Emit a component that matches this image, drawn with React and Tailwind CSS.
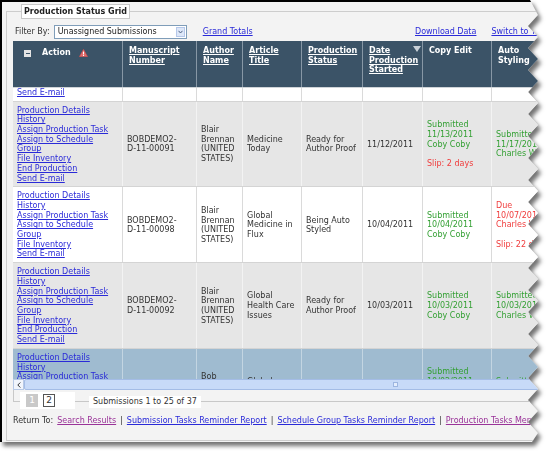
import React, { useLayoutEffect, useRef } from "react";

const LINK = "text-[#2a2ad8] underline";
const VISITED = "text-[#9a3399] underline";
const G = "text-[#34a034]";
const R = "text-[#f03c3c]";

const COLS = ["w-[110px]", "w-[74px]", "w-[46px]", "w-[59px]", "w-[61px]", "w-[60px]", "w-[69px]", "w-[70px]"];

function Lines({ lines, color = "" }) {
  return (
    <div className={color}>
      {lines.map((l, i) => {
        const text = Array.isArray(l) ? l[0] : l;
        const c = Array.isArray(l) ? l[1] : "";
        return (
          <div key={i} className={"whitespace-nowrap h-[9.7px] " + c}>
            {text || "\u00a0"}
          </div>
        );
      })}
    </div>
  );
}

function Actions({ end }) {
  return (
    <div className="flex flex-col items-start whitespace-nowrap">
      <a href="#" className={LINK}>Production Details</a>
      <a href="#" className={LINK}>History</a>
      <a href="#" className={LINK}>Assign Production Task</a>
      <a href="#" className={LINK}>Assign to Schedule<br />Group</a>
      <a href="#" className={LINK}>File Inventory</a>
      {end && <a href="#" className={LINK}>End Production</a>}
      <a href="#" className={LINK}>Send E-mail</a>
    </div>
  );
}

const BLAIR = ["Blair", "Brennan", "(UNITED", "STATES)"];

const rows = [
  {
    bg: "bg-white", sep: "border-[#dadada]", end: true,
    ms: ["BOBDEMO2-", "D-11-00093"], author: BLAIR, article: ["Medicine", "Now"],
    status: ["Ready for", "Author Proof"], date: "11/14/2011",
    copy: [["Submitted", G], ["11/15/2011", G], ["Coby Coby", G]],
    auto: [["Submitted", G], ["11/18/2011", G], ["Charles Wong", G]],
  },
  {
    bg: "bg-[#e6e6e6]", sep: "border-[#f3f3f3]", end: true,
    ms: ["BOBDEMO2-", "D-11-00091"], author: BLAIR, article: ["Medicine", "Today"],
    status: ["Ready for", "Author Proof"], date: "11/12/2011",
    copy: [["Submitted", G], ["11/13/2011", G], ["Coby Coby", G], "", ["Slip: 2 days", R]],
    auto: [["Submitted", G], ["11/17/2011", G], ["Charles Wong", G]],
  },
  {
    bg: "bg-white", sep: "border-[#dadada]", end: false,
    ms: ["BOBDEMO2-", "D-11-00098"], author: BLAIR, article: ["Global", "Medicine in", "Flux"],
    status: ["Being Auto", "Styled"], date: "10/04/2011",
    copy: [["Submitted", G], ["10/04/2011", G], ["Coby Coby", G]],
    auto: [["Due", R], ["10/07/2011", R], ["Charles Wong", R], "", ["Slip: 22 days", R]],
  },
  {
    bg: "bg-[#e6e6e6]", sep: "border-[#f3f3f3]", end: true,
    ms: ["BOBDEMO2-", "D-11-00092"], author: BLAIR, article: ["Global", "Health Care", "Issues"],
    status: ["Ready for", "Author Proof"], date: "10/03/2011",
    copy: [["Submitted", G], ["10/03/2011", G], ["Coby Coby", G]],
    auto: [["Submitted", G], ["10/03/2011", G], ["Charles Wong", G]],
  },
  {
    bg: "bg-[#9fbbd0]", sep: "border-[#c3d5e2]", end: true,
    ms: ["BOBDEMO2-", "D-11-00089"], author: ["Bob", "Smith", "(UNITED", "STATES)"], article: ["Global", "Medicine", "Review"],
    status: ["Ready for", "Author Proof"], date: "10/01/2011",
    copy: [["Submitted", G], ["10/02/2011", G], ["Coby Coby", G], "", ["Slip: 1 day", R]],
    auto: [["Submitted", G], ["10/05/2011", G], ["Charles Wong", G]],
  },
];

function Row({ row, rowRef }) {
  const cell = (i) =>
    COLS[i] + " shrink-0 overflow-hidden border-r flex flex-col justify-center pl-[4px] pt-[4px] pb-[3px] " + row.sep;
  return (
    <div ref={rowRef} className={"flex border-b border-[#d4d4d4] " + row.bg}>
      <div className={cell(0)}><Actions end={row.end} /></div>
      <div className={cell(1)}><Lines lines={row.ms} /></div>
      <div className={cell(2)}><Lines lines={row.author} /></div>
      <div className={cell(3)}><Lines lines={row.article} /></div>
      <div className={cell(4)}><Lines lines={row.status} /></div>
      <div className={cell(5)}><Lines lines={[row.date]} /></div>
      <div className={cell(6)}><Lines lines={row.copy} /></div>
      <div className={cell(7)}><Lines lines={row.auto} /></div>
    </div>
  );
}

function HeadCell({ i, lines, link = true, children }) {
  return (
    <div className={COLS[i] + " relative shrink-0 border-r border-[#8797a5] pl-[6px] pt-[5px]"}>
      {lines.map((l, k) => (
        <div key={k} className={"whitespace-nowrap h-[9.7px] " + (link ? "underline" : "")}>{l}</div>
      ))}
      {children}
    </div>
  );
}

export default function App() {
  const scRef = useRef(null);
  const r0 = useRef(null);
  useLayoutEffect(() => {
    if (scRef.current && r0.current) {
      scRef.current.scrollTop = r0.current.offsetHeight - 14;
    }
  }, []);

  return (
    <div className="w-[547px] h-[451px] bg-white overflow-hidden [font-family:'DejaVu_Sans',Verdana,sans-serif] text-[8px] leading-[9.7px] text-[#333]">
      <div className="[filter:drop-shadow(3px_4px_2px_rgba(0,0,0,0.55))]">
        <div className="w-[547px] h-[442px] bg-[#f3f3f3] border-l-2 border-t-2 border-black overflow-hidden [clip-path:polygon(0_0,530px_0,538px_15px,528px_26px,538px_37px,528px_48px,538px_59px,528px_70px,538px_81px,528px_92px,538px_103px,528px_114px,538px_125px,528px_136px,538px_147px,528px_158px,538px_169px,528px_180px,538px_191px,528px_202px,538px_213px,528px_224px,538px_235px,528px_246px,538px_257px,528px_268px,538px_279px,528px_290px,538px_301px,528px_312px,538px_323px,528px_334px,538px_345px,528px_356px,538px_367px,528px_378px,538px_389px,528px_400px,538px_411px,528px_422px,538px_433px,532px_442px,0_442px)]">
          <fieldset className="ml-[4px] mt-[2px] w-[600px] h-[437px] border border-[#cdcdcd] pl-[6px] min-w-0">
            <legend className="ml-[8px] px-[2px] border border-[#c9c9c9] bg-white font-bold leading-[13px] text-[#222]">
              Production Status Grid
            </legend>

            {/* Filter row */}
            <div className="mt-[6px] flex items-center h-[14px]">
              <div className="w-[402px] shrink-0 flex items-center">
                <span className="ml-[2px] text-[#333]">Filter By:</span>
                <div className="ml-[4px] w-[133px] h-[14px] border border-[#7f9db9] bg-white flex items-center">
                  <span className="pl-[3px] flex-1 text-[#222] whitespace-nowrap">Unassigned Submissions</span>
                  <div className="mr-[1px] w-[9px] h-[10px] bg-[#dde7f8] border border-[#b6c8ea] flex items-center justify-center">
                    <svg width="5" height="4" viewBox="0 0 5 4">
                      <path d="M0.5 0.8 L2.5 3 L4.5 0.8" fill="none" stroke="#4d6185" strokeWidth="1" />
                    </svg>
                  </div>
                </div>
                <a href="#" className={"ml-[16px] " + LINK}>Grand Totals</a>
              </div>
              <a href="#" className={"whitespace-nowrap " + LINK}>Download Data</a>
              <a href="#" className={"ml-[15px] whitespace-nowrap " + LINK}>Switch to Tabular View</a>
            </div>

            {/* Header */}
            <div className="mt-[2px] flex w-[549px] h-[47px] bg-[#3b5367] border-b border-[#cfd4d8] text-white font-bold">
              <div className={COLS[0] + " shrink-0 border-r border-[#8797a5] pl-[11px] pt-[7px]"}>
                <div className="flex items-center h-[10px]">
                  <div className="w-[7px] h-[7px] bg-[#e4e4e4] flex items-center justify-center">
                    <div className="w-[4px] h-[1px] bg-[#3b5367]" />
                  </div>
                  <span className="ml-[11px]">Action</span>
                  <svg className="ml-[8px]" width="9" height="8" viewBox="0 0 9 8">
                    <path d="M4.5 0.3 L8.7 7.7 L0.3 7.7 Z" fill="#e46c6c" stroke="#c94b4b" strokeWidth="0.5" />
                    <rect x="4" y="2.6" width="1" height="2.8" fill="#fff" />
                    <rect x="4" y="6" width="1" height="1" fill="#fff" />
                  </svg>
                </div>
              </div>
              <HeadCell i={1} lines={["Manuscript", "Number"]} />
              <HeadCell i={2} lines={["Author", "Name"]} />
              <HeadCell i={3} lines={["Article", "Title"]} />
              <HeadCell i={4} lines={["Production", "Status"]} />
              <HeadCell i={5} lines={["Date", "Production", "Started"]}>
                <svg className="absolute right-[1px] top-[5px]" width="8" height="6" viewBox="0 0 8 6">
                  <path d="M0 0 L8 0 L4 6 Z" fill="#c9d1d8" />
                </svg>
              </HeadCell>
              <HeadCell i={6} lines={["Copy Edit"]} link={false} />
              <HeadCell i={7} lines={["Auto", "Styling"]} link={false} />
            </div>

            {/* Body */}
            <div ref={scRef} className="w-[549px] h-[291px] overflow-hidden">
              {rows.map((row, i) => (
                <Row key={i} row={row} rowRef={i === 0 ? r0 : undefined} />
              ))}
            </div>

            {/* Horizontal scrollbar */}
            <div className="flex w-[549px] h-[11px]">
              <div className="w-[11px] h-full shrink-0 bg-[#f1f5fc] border border-[#b7c9e6] flex items-center justify-center">
                <svg width="4" height="6" viewBox="0 0 4 6">
                  <path d="M3.3 0.5 L0.8 3 L3.3 5.5" fill="none" stroke="#333" strokeWidth="1" />
                </svg>
              </div>
              <div className="flex-1 h-full bg-[#c7daf8] border border-[#a3bce6] rounded-[2px] flex items-center">
                <div className="ml-[368px] w-[5px] h-[5px] bg-[#e4edfc] border border-[#9db6e0]" />
              </div>
            </div>

            {/* Pagination */}
            <div className="relative w-[549px] h-[20px]">
              <div className="absolute left-0 top-0 w-full h-[12px] border-l border-b border-[#c8c8c8]" />
              <div className="relative flex items-start">
                <div className="ml-[7px] mt-[2px] w-[55px] h-[17px] bg-white flex items-center pl-[6px]">
                  <div className="w-[12px] h-[13px] bg-[#c9c9c9] text-white text-[9px] flex items-center justify-center">1</div>
                  <div className="ml-[5px] w-[12px] h-[13px] border border-[#555] bg-white text-[#333] text-[9px] flex items-center justify-center">2</div>
                </div>
                <div className="ml-[14px] mt-[6px] h-[12px] bg-white px-[4px] flex items-center text-[#333] whitespace-nowrap">
                  Submissions 1 to 25 of 37
                </div>
              </div>
            </div>

            {/* Return To */}
            <div className="mt-[6px] flex items-center whitespace-nowrap text-[#333]">
              <span>Return To:</span>
              <a href="#" className={"ml-[4px] " + VISITED}>Search Results</a>
              <span className="mx-[4px]">|</span>
              <a href="#" className={LINK}>Submission Tasks Reminder Report</a>
              <span className="mx-[4px]">|</span>
              <a href="#" className={LINK}>Schedule Group Tasks Reminder Report</a>
              <span className="mx-[4px]">|</span>
              <a href="#" className={VISITED}>Production Tasks Menu</a>
            </div>
          </fieldset>
        </div>
      </div>
    </div>
  );
}
